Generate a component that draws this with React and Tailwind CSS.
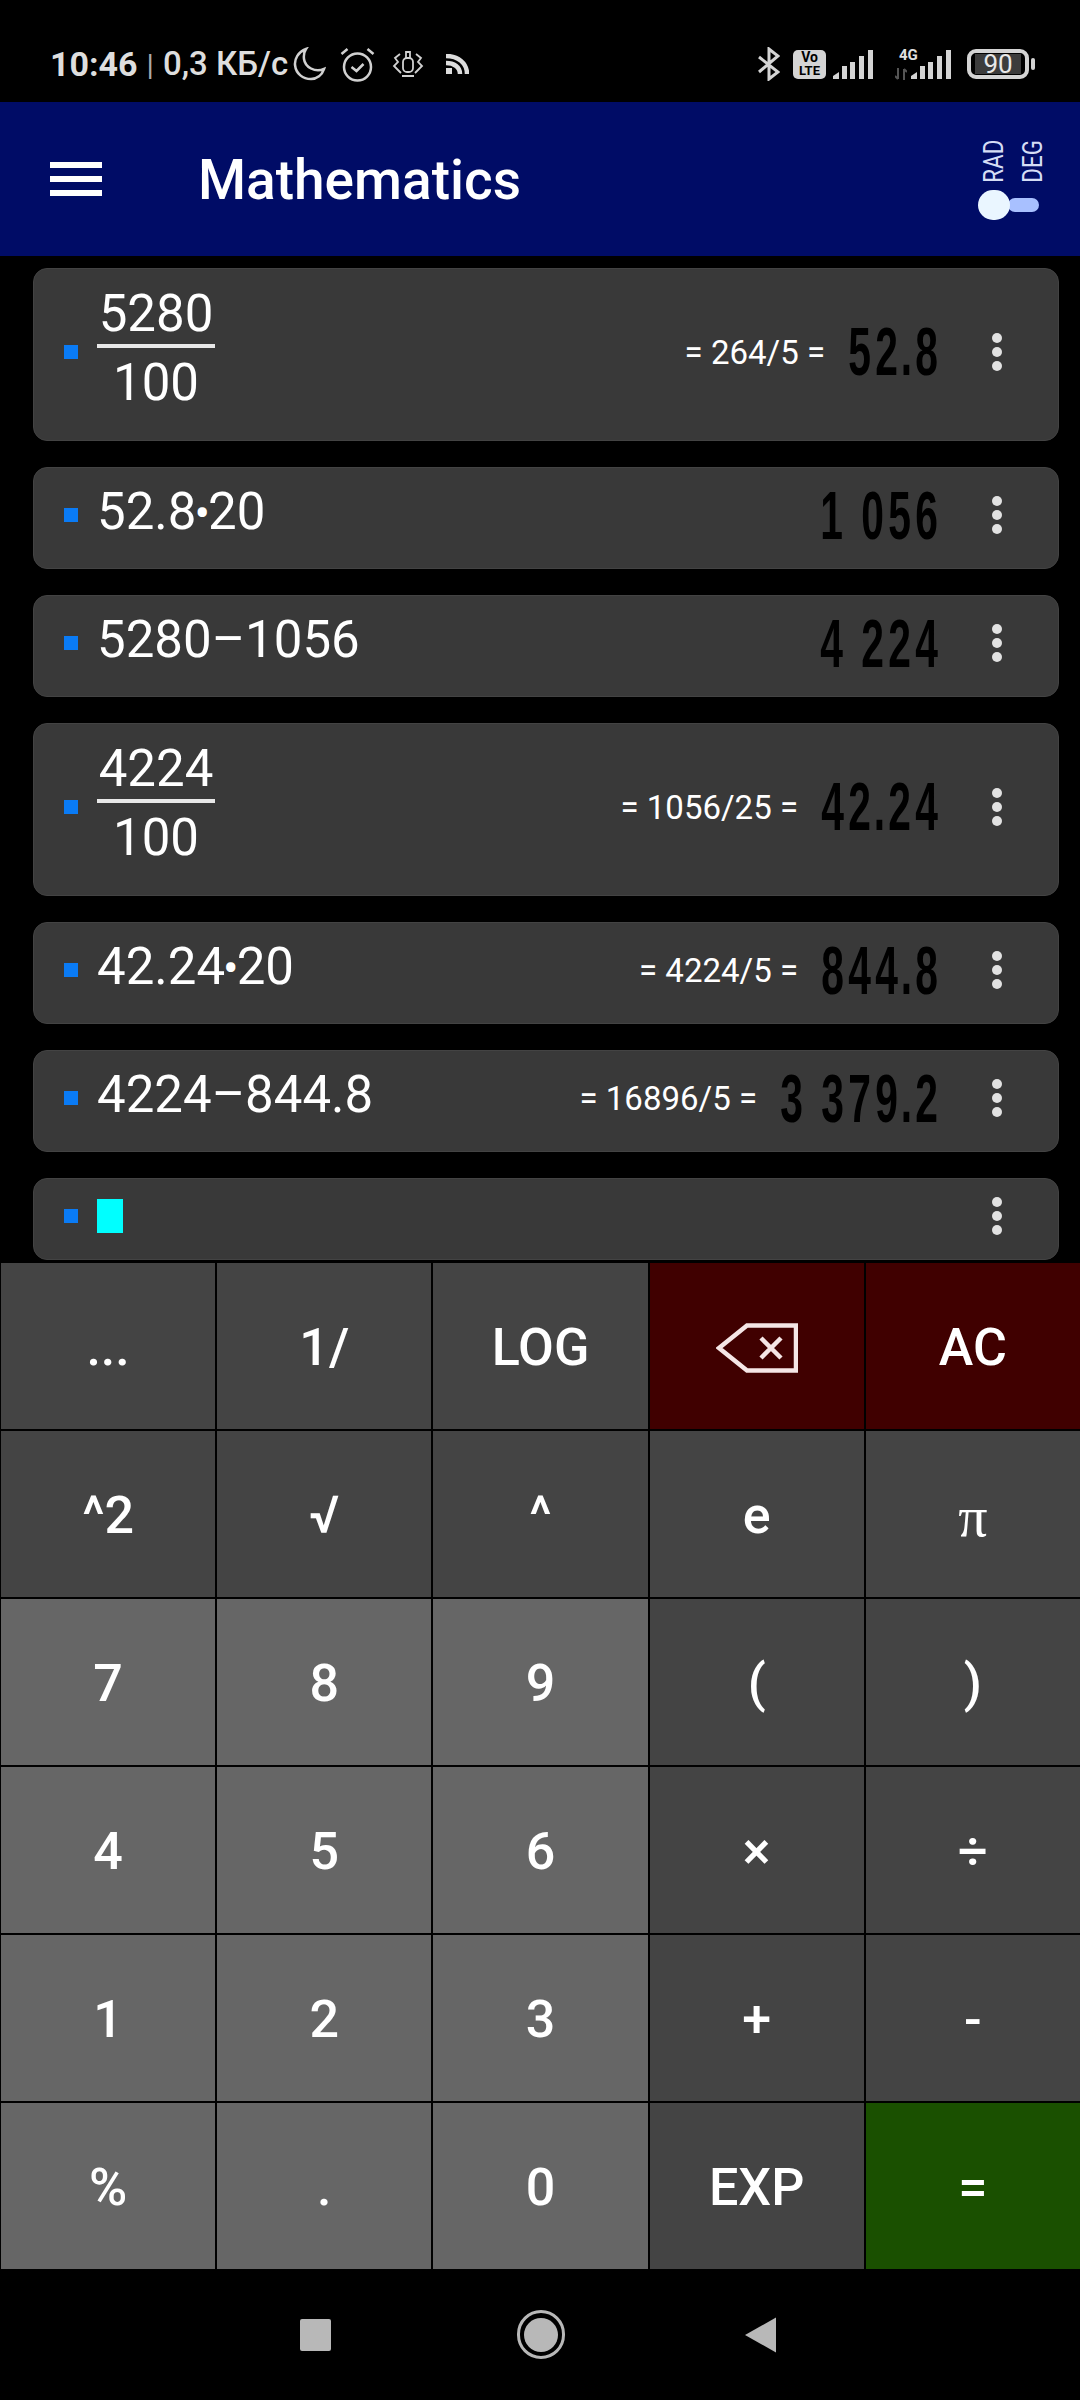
import React from 'react';

const rows = [
  { num: '5280', den: '100', eq: '= 264/5 =', lcd: '52.8' },
  { expr: ['52.8', '20'], lcd: '1 056' },
  { expr: ['5280–1056'], lcd: '4 224' },
  { num: '4224', den: '100', eq: '= 1056/25 =', lcd: '42.24' },
  { expr: ['42.24', '20'], eq: '= 4224/5 =', lcd: '844.8' },
  { expr: ['4224–844.8'], eq: '= 16896/5 =', lcd: '3 379.2' },
];

const keys = [
  ['...', 'fn'], ['1/', 'fn'], ['LOG', 'fn'], ['back', 'red'], ['AC', 'red'],
  ['^2', 'fn'], ['√', 'fn'], ['^', 'fn'], ['e', 'fn'], ['π', 'fn'],
  ['7', 'num'], ['8', 'num'], ['9', 'num'], ['(', 'fn'], [')', 'fn'],
  ['4', 'num'], ['5', 'num'], ['6', 'num'], ['×', 'fn'], ['÷', 'fn'],
  ['1', 'num'], ['2', 'num'], ['3', 'num'], ['+', 'fn'], ['-', 'fn'],
  ['%', 'num'], ['.', 'num'], ['0', 'num'], ['EXP', 'fn'], ['=', 'green'],
];

const keyColors = {
  fn: 'bg-[#444444]',
  num: 'bg-[#666666]',
  red: 'bg-[#400000]',
  green: 'bg-[#1a5000]',
};

const SignalBars = () => (
  <svg width="40" height="29" viewBox="0 0 40 29" fill="#d4d4d4">
    <path d="M0 29V26L6 22V29Z" />
    <rect x="9" y="16" width="5" height="13" />
    <rect x="17" y="12" width="5" height="17" />
    <rect x="26" y="6" width="5" height="23" />
    <rect x="35" y="0" width="5" height="29" />
  </svg>
);

const StatusBar = () => (
  <div className="h-[102px] pt-[26px] pl-[50px] pr-[45px] flex items-center text-[#dedede]">
    <span className="text-[34px] font-bold">10:46</span>
    <span className="text-[30px] font-normal mx-[9px] text-[#aaaaaa]">|</span>
    <span className="text-[33px] font-medium w-[130px] whitespace-nowrap">0,3 КБ/с</span>
    <svg width="33" height="34" viewBox="0 0 33 34" fill="none" stroke="#d0d0d0" strokeWidth="2.5">
      <path d="M13 2C5 5 1.500 12 2 18C3 27 10 32 18 32C24 32 29 28 31 22C22 26 12 20 11 12C10.500 8 11 5 13 2Z" />
    </svg>
    <svg className="ml-[14px]" width="35" height="35" viewBox="0 0 34 35" fill="none" stroke="#d0d0d0" strokeWidth="2.5">
      <circle cx="17" cy="20" r="13.500" />
      <path d="M1 7L7 2M33 7L27 2M11 20L16 24L23 17" />
    </svg>
    <svg className="ml-[17px]" width="32" height="28" viewBox="0 0 32 28" fill="none" stroke="#d0d0d0" strokeWidth="1.800">
      <rect x="11" y="8" width="10" height="14" rx="4" />
      <path d="M14 8V2H18V8M8 4L3 8L6 12L2 16L6 20L9 23M24 4L29 8L26 12L30 16L26 20L23 23M10 26H22" />
    </svg>
    <svg className="ml-[22px]" width="23" height="20" viewBox="0 0 23 20" fill="none" stroke="#dcdcdc" strokeWidth="4.500">
      <path d="M0 9C8 9 14 13 14 20M0 2C12 2 21 9 21 20" />
      <rect x="0" y="14" width="6" height="6" fill="#dcdcdc" stroke="none" />
    </svg>
    <div className="flex-1" />
    <svg width="22" height="34" viewBox="0 0 22 34" fill="none" stroke="#d4d4d4" strokeWidth="3">
      <path d="M1 10L20 25L11 32V2L20 9L1 25" />
    </svg>
    <div className="ml-[13px] w-[33px] h-[29px] rounded-[5px] bg-[#d4d4d4] flex flex-col items-center justify-center text-black font-bold">
      <span className="text-[14px] leading-[13px]">Vo</span>
      <span className="text-[13px] leading-[13px]">LTE</span>
    </div>
    <div className="ml-[7px]"><SignalBars /></div>
    <div className="ml-[22px] w-[16px] h-[32px] flex flex-col justify-between">
      <span className="text-[15px] leading-[14px] font-bold text-[#e0e0e0] pl-[4px] whitespace-nowrap">4G</span>
      <svg width="12" height="12" viewBox="0 0 12 12" fill="none" stroke="#555555" strokeWidth="2">
        <path d="M3 0V11M0 8L3 11M9 12V1M9 1L12 4" />
      </svg>
    </div>
    <SignalBars />
    <div className="ml-[16px] w-[62px] h-[30px] rounded-[9px] border-[4px] border-[#d4d4d4] flex items-center justify-center">
      <div className="w-[46px] h-[20px] bg-[#3c3c3c] flex items-center justify-center text-[26px] text-[#e8e8e8]">90</div>
    </div>
    <div className="ml-[2px] w-[4px] h-[12px] rounded-full bg-[#d4d4d4]" />
  </div>
);

const AppBar = () => (
  <div className="h-[154px] bg-[#000c66] flex items-center pl-[50px] pr-[38px]">
    <div className="w-[52px] flex flex-col gap-[8px]">
      <div className="h-[6px] bg-white" />
      <div className="h-[6px] bg-white" />
      <div className="h-[6px] bg-white" />
    </div>
    <h1 className="ml-[96px] pt-[3px] text-[55px] font-medium text-white">Mathematics</h1>
    <div className="ml-auto w-[64px] flex flex-col">
      <div className="flex gap-[19px] pl-[6px] text-[#d5ddf5] text-[28px] leading-[20px] -translate-y-[3px]">
        <span className="[writing-mode:vertical-rl] rotate-180 scale-y-[0.8] h-[51px] flex justify-center">RAD</span>
        <span className="[writing-mode:vertical-rl] rotate-180 scale-y-[0.8] h-[51px] flex justify-center">DEG</span>
      </div>
      <div className="flex items-center">
        <div className="relative z-10 w-[32px] h-[30px] rounded-full bg-[#eaf6ff]" />
        <div className="-ml-[2px] w-[31px] h-[14px] rounded-full bg-[#a8c0ff]" />
      </div>
    </div>
  </div>
);

const Lcd = ({ value }) => (
  <div className="flex justify-end text-black font-bold text-[68px] leading-[47px] h-[47px] font-['Liberation_Sans',sans-serif]">
    {value.split('').map((ch, i) => {
      const w = ch === '.' ? 'w-[13px]' : ch === ' ' ? 'w-[14px]' : 'w-[27px]';
      return (
        <span key={i} className={`${w} flex justify-center scale-x-[0.6]`}>
          {ch === ' ' ? '\u00a0' : ch}
        </span>
      );
    })}
  </div>
);

const Dots = () => (
  <div className="ml-[52px] mr-[56px] flex flex-col gap-[4px] w-[10px]">
    <div className="w-[10px] h-[10px] rounded-full bg-[#e2e2e2]" />
    <div className="w-[10px] h-[10px] rounded-full bg-[#e2e2e2]" />
    <div className="w-[10px] h-[10px] rounded-full bg-[#e2e2e2]" />
  </div>
);

const Card = ({ row }) => {
  const tall = !!row.num;
  return (
    <div className={`${tall ? 'h-[173px]' : 'h-[102px]'} shrink-0 rounded-[14px] bg-[#393939] border border-[#434343] flex items-center pb-[6px] pl-[30px]`}>
      <div className="w-[14px] h-[14px] bg-[#0a7bf5]" />
      {tall ? (
        <div className="ml-[19px] w-[118px] pb-[6px] flex flex-col items-center text-[51px] leading-[50px] text-white">
          <span className="h-[55px]">{row.num}</span>
          <div className="w-full h-[4px] bg-[#e8e8e8] mb-[10px]" />
          <span className="h-[50px]">{row.den}</span>
        </div>
      ) : (
        <span className="ml-[19px] text-[51px] leading-[50px] text-white pb-[6px]">
          {row.expr[0]}
          {row.expr[1] && <span className="text-[46px] leading-none -mx-[2px]">•</span>}
          {row.expr[1]}
        </span>
      )}
      <div className="flex-1" />
      {row.eq && <span className="text-[33px] text-white mr-[21px] pt-[2px]">{row.eq}</span>}
      <Lcd value={row.lcd} />
      <Dots />
    </div>
  );
};

const Key = ({ label, tone }) => (
  <div className={`${keyColors[tone]} flex items-center justify-center pt-[4px] text-white text-[52px] font-medium`}>
    {label === 'back' ? (
      <svg width="82" height="50" viewBox="0 0 82 50" fill="none" stroke="#f5e6e6">
        <path d="M3 25L31 2.500H80V47.500H31Z" strokeWidth="4.500" />
        <path d="M45 15L65 35M65 15L45 35" strokeWidth="4.500" />
      </svg>
    ) : label === 'π' ? (
      <span className="font-['Liberation_Serif',serif] font-normal text-[58px]">π</span>
    ) : (
      label
    )}
  </div>
);

const NavBar = () => (
  <div className="flex-1 flex items-center pl-[300px]">
    <div className="w-[31px] h-[32px] rounded-[2px] bg-[#b8b8b8]" />
    <div className="ml-[186px] w-[48px] h-[49px] rounded-full border-[3px] border-[#b8b8b8] flex items-center justify-center">
      <div className="w-[34px] h-[34px] rounded-full bg-[#b8b8b8]" />
    </div>
    <svg className="ml-[180px]" width="32" height="36" viewBox="0 0 32 36" fill="#b8b8b8">
      <path d="M0 18L31 0.500V35.500Z" />
    </svg>
  </div>
);

export default function App() {
  return (
    <div className="w-[1080px] h-[2400px] bg-black flex flex-col overflow-hidden font-['Roboto',sans-serif]">
      <StatusBar />
      <AppBar />
      <div className="h-[1007px] overflow-hidden flex flex-col gap-[26px] pt-[12px] pl-[33px] pr-[21px]">
        {rows.map((row, i) => <Card key={i} row={row} />)}
        <div className="h-[82px] shrink-0 rounded-[14px] bg-[#393939] border border-[#434343] flex items-center pb-[6px] pl-[30px]">
          <div className="w-[14px] h-[14px] bg-[#0a7bf5]" />
          <div className="ml-[19px] w-[26px] h-[34px] bg-[#00ffff]" />
          <div className="flex-1" />
          <Dots />
        </div>
      </div>
      <div className="h-[1006px] pl-px grid grid-cols-5 grid-rows-6 gap-[2px]">
        {keys.map(([label, tone]) => <Key key={label} label={label} tone={tone} />)}
      </div>
      <NavBar />
    </div>
  );
}
